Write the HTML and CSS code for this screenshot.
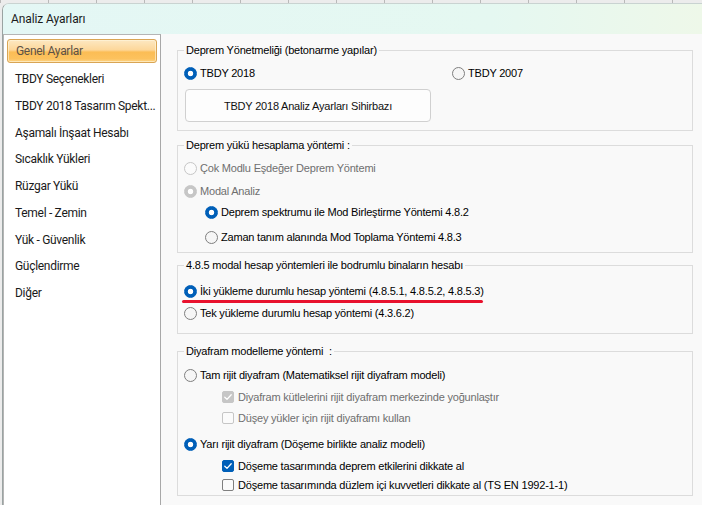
FILE: index.html
```html
<!DOCTYPE html>
<html lang="tr">
<head>
<meta charset="utf-8">
<title>Analiz Ayarları</title>
<link rel="stylesheet" href="styles.css">
</head>
<body>
<div class="dialog">
  <div class="titlebar">Analiz Ayarları</div>
  <div class="main">
    <ul class="nav">
      <li class="nav-item selected"><span class="sel-box">Genel Ayarlar</span></li>
      <li class="nav-item">TBDY Seçenekleri</li>
      <li class="nav-item">TBDY 2018 Tasarım Spekt...</li>
      <li class="nav-item">Aşamalı İnşaat Hesabı</li>
      <li class="nav-item">Sıcaklık Yükleri</li>
      <li class="nav-item">Rüzgar Yükü</li>
      <li class="nav-item">Temel - Zemin</li>
      <li class="nav-item">Yük - Güvenlik</li>
      <li class="nav-item">Güçlendirme</li>
      <li class="nav-item">Diğer</li>
    </ul>
    <div class="content">
      <fieldset class="group g1">
        <legend>Deprem Yönetmeliği (betonarme yapılar)</legend>
        <div class="pair-row">
          <label class="opt"><span class="radio on"></span><span>TBDY 2018</span></label>
          <label class="opt"><span class="radio"></span><span>TBDY 2007</span></label>
        </div>
        <button class="wizard">TBDY 2018 Analiz Ayarları Sihirbazı</button>
      </fieldset>

      <fieldset class="group g2">
        <legend>Deprem yükü hesaplama yöntemi :</legend>
        <label class="opt dis r1"><span class="radio dis"></span><span>Çok Modlu Eşdeğer Deprem Yöntemi</span></label>
        <label class="opt dis r2"><span class="radio dis on"></span><span>Modal Analiz</span></label>
        <label class="opt sub r3"><span class="radio on"></span><span>Deprem spektrumu ile Mod Birleştirme Yöntemi 4.8.2</span></label>
        <label class="opt sub r4"><span class="radio"></span><span>Zaman tanım alanında Mod Toplama Yöntemi 4.8.3</span></label>
      </fieldset>

      <fieldset class="group g3">
        <legend>4.8.5 modal hesap yöntemleri ile bodrumlu binaların hesabı</legend>
        <label class="opt q1"><span class="radio on"></span><span>İki yükleme durumlu hesap yöntemi (4.8.5.1, 4.8.5.2, 4.8.5.3)</span><span class="mark"></span></label>
        <label class="opt q2"><span class="radio"></span><span>Tek yükleme durumlu hesap yöntemi (4.3.6.2)</span></label>
      </fieldset>

      <fieldset class="group g4">
        <legend>Diyafram modelleme yöntemi &nbsp;:</legend>
        <label class="opt d1"><span class="radio"></span><span>Tam rijit diyafram (Matematiksel rijit diyafram modeli)</span></label>
        <label class="opt dis deep d2"><span class="chk dis on"><svg viewBox="0 0 12 12" width="12" height="12"><path d="M2.8 6.3 L5 8.4 L9.2 3.8" fill="none" stroke="#fff" stroke-width="1.3" stroke-linecap="round" stroke-linejoin="round"/></svg></span><span>Diyafram kütlelerini rijit diyafram merkezinde yoğunlaştır</span></label>
        <label class="opt dis deep d3"><span class="chk dis"></span><span>Düşey yükler için rijit diyaframı kullan</span></label>
        <label class="opt d4"><span class="radio on"></span><span>Yarı rijit diyafram (Döşeme birlikte analiz modeli)</span></label>
        <label class="opt deep d5"><span class="chk on"><svg viewBox="0 0 12 12" width="12" height="12"><path d="M2.8 6.3 L5 8.4 L9.2 3.8" fill="none" stroke="#fff" stroke-width="1.3" stroke-linecap="round" stroke-linejoin="round"/></svg></span><span>Döşeme tasarımında deprem etkilerini dikkate al</span></label>
        <label class="opt deep d6"><span class="chk"></span><span>Döşeme tasarımında düzlem içi kuvvetleri dikkate al (TS EN 1992-1-1)</span></label>
      </fieldset>
    </div>
  </div>
</div>
</body>
</html>
```
FILE: styles.css
```css
html, body {
  margin: 0;
  padding: 0;
  height: 100%;
  overflow: hidden;
}
body {
  background: #ececec;
  background-image: linear-gradient(to right, #b9b9b9 0 1px, transparent 1px);
  background-size: 48px 3px;
  background-repeat: repeat-x;
}
.dialog {
  margin: 3px 0 0 2px;
  height: calc(100% - 3px);
  border-top: 1px solid #c9d3d1;
  border-left: 1px solid #9aa3a2;
  border-top-left-radius: 7px;
  background: #f9f9f9;
  overflow: hidden;
  font-family: "Liberation Sans", Arial, sans-serif;
}
.titlebar {
  height: 30px;
  line-height: 30px;
  padding-left: 8px;
  font-family: Roboto, "Noto Sans", sans-serif;
  font-size: 12px;
  letter-spacing: -0.1px;
  color: #1b1b1b;
  background: linear-gradient(to right, #e4f7f5 0%, #e5f8f1 70%, #eef8e9 100%);
}
.main {
  display: flex;
  height: calc(100% - 30px);
}
.nav {
  list-style: none;
  margin: 0;
  padding: 4px 3px 0 3px;
  width: 158px;
  box-sizing: border-box;
  flex: none;
  background: #fff;
  border: 1px solid #b5b5b5;
  border-right-color: #a8a8a8;
  font-family: Roboto, "Noto Sans", sans-serif;
  font-size: 12px;
  letter-spacing: -0.3px;
  color: #1a1a1a;
}
.nav-item {
  height: 26.75px;
  line-height: 26.75px;
  padding-left: 8px;
  white-space: nowrap;
}
.nav-item.selected {
  height: 24px;
  line-height: 22px;
  padding-left: 0;
  margin-bottom: 3px;
}
.sel-box {
  display: block;
  height: 24px;
  box-sizing: border-box;
  padding-left: 8px;
  border: 1px solid #d9a554;
  border-radius: 3px;
  color: #5d5246;
  background: linear-gradient(#fde8c2 0%, #fdd79a 45%, #fbbd55 55%, #fcc25e 85%, #fdd488 100%);
  box-shadow: inset 0 0 0 1px rgba(255, 246, 222, 0.6);
}
.content {
  flex: 1;
  padding: 10px 9px 0 16px;
  font-size: 11px;
  letter-spacing: -0.2px;
  color: #000;
}
.group {
  margin: 0;
  padding: 0 6px;
  border: 1px solid #dcdcdc;
  min-width: 0;
}
.group legend {
  padding: 0 2px;
  font-size: 11px;
  line-height: 13px;
  color: #000;
}
.g1 { padding-bottom: 8px; }
.g2 { margin-top: 8px; padding-bottom: 7px; }
.g3 { margin-top: 6px; padding-bottom: 12px; }
.g4 { margin-top: 11px; padding-bottom: 2px; }

.opt {
  display: flex;
  align-items: center;
  gap: 3px;
  height: 16px;
  white-space: nowrap;
  position: relative;
}
.opt.dis { color: #6f6f6f; }
.sub { margin-left: 21px; }
.deep { margin-left: 38px; gap: 4px; }

.pair-row {
  display: grid;
  grid-template-columns: 268px auto;
  margin-top: 8px;
  height: 16px;
}
.wizard {
  display: block;
  margin: 8px 0 0 1px;
  width: 246px;
  height: 33px;
  border: 1px solid #d0d0d0;
  border-radius: 4px;
  background: #fdfdfd;
  font-family: "Liberation Sans", Arial, sans-serif;
  font-size: 11px;
  letter-spacing: -0.2px;
  color: #111;
  padding: 0;
}

.r1 { margin-top: 8px; }
.r2 { margin-top: 7px; }
.r3 { margin-top: 5px; }
.r4 { margin-top: 9px; }

.q1 { margin-top: 11px; }
.q2 { margin-top: 6px; }

.d1 { margin-top: 9px; }
.d2 { margin-top: 6px; }
.d3 { margin-top: 5px; }
.d4 { margin-top: 10px; }
.d5 { margin-top: 6px; }
.d6 { margin-top: 3px; }

.radio {
  flex: none;
  width: 13px;
  height: 13px;
  box-sizing: border-box;
  border-radius: 50%;
  border: 1px solid #7f7f7f;
  background: #f6f6f6;
}
.radio.on {
  border-color: #005fb8;
  background: radial-gradient(circle, #fff 0 2.4px, #005fb8 3.1px);
}
.radio.dis {
  border-color: #c6c6c6;
  background: #fbfbfb;
}
.radio.dis.on {
  border-color: #c6c6c6;
  background: radial-gradient(circle, #fff 0 2.4px, #c6c6c6 3.1px);
}
.chk {
  flex: none;
  width: 12px;
  height: 12px;
  box-sizing: border-box;
  border-radius: 2px;
  border: 1px solid #7f7f7f;
  background: #fbfbfb;
  display: flex;
  align-items: center;
  justify-content: center;
  overflow: hidden;
}
.chk svg { flex: none; }
.chk.on {
  border-color: #005fb8;
  background: #005fb8;
}
.chk.dis { border-color: #c6c6c6; }
.chk.dis.on {
  border-color: #c6c6c6;
  background: #c6c6c6;
}
.mark {
  position: absolute;
  left: -2px;
  top: 17px;
  width: 301px;
  height: 3px;
  border-radius: 2px;
  background: #e8112d;
}
```
